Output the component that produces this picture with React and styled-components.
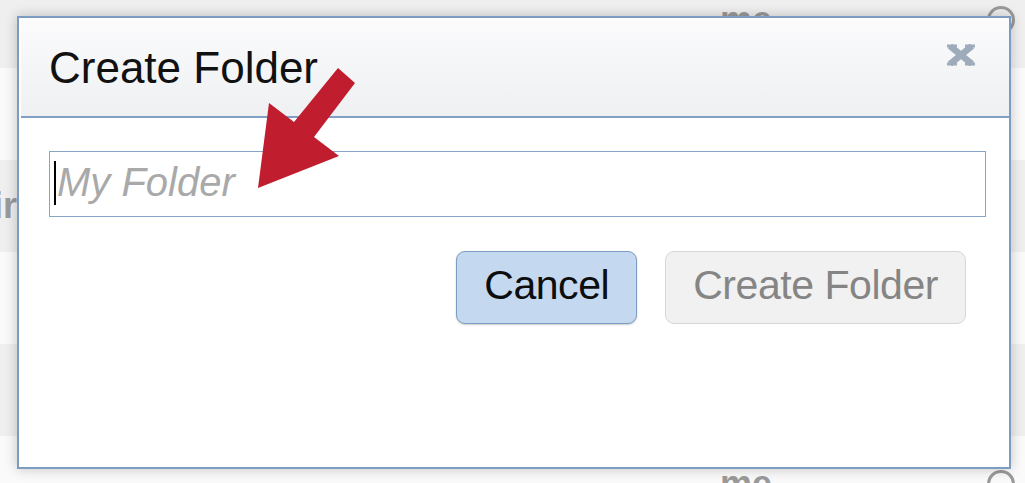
import React from "react";
import styled, { createGlobalStyle } from "styled-components";

const Global = createGlobalStyle`
  html, body { margin: 0; padding: 0; }
  body {
    width: 1025px;
    height: 483px;
    overflow: hidden;
    background: #f7f7f7;
    font-family: "Liberation Sans", Arial, Helvetica, sans-serif;
  }
`;

const Page = styled.div`
  position: relative;
  width: 1025px;
  height: 483px;
  overflow: hidden;
`;

const RowList = styled.div`
  display: flex;
  flex-direction: column;
  margin-top: -24px;
`;

const Row = styled.div`
  display: flex;
  align-items: center;
  height: 92px;
  background: ${(p) => (p.$shade ? "#efefef" : "#fafafa")};
  color: #9a9a9a;
  font-size: 36px;
  font-weight: bold;
`;

const RowName = styled.div`
  width: 17px;
  overflow: hidden;
  direction: rtl;
  white-space: nowrap;
`;

const RowMeta = styled.div`
  margin-left: 703px;
  width: 245px;
  margin-top: ${(p) => p.$shift || 0}px;
`;

const RowIcon = styled.div`
  margin-left: 22px;
  margin-top: ${(p) => p.$shift || 0}px;
  width: 22px;
  height: 22px;
  border: 3px solid #9a9a9a;
  border-radius: 50%;
`;

const Dialog = styled.div`
  position: absolute;
  left: 17px;
  top: 16px;
  width: 988px;
  height: 447px;
  border: 2px solid #7c9cc2;
  background: #ffffff;
  box-shadow: 0 0 12px rgba(0, 0, 0, 0.22);
  display: flex;
  flex-direction: column;
  padding: 2px 0 0 2px;
  box-sizing: content-box;
`;

const Header = styled.div`
  display: flex;
  align-items: center;
  justify-content: space-between;
  height: 96px;
  padding: 0 33px 0 28px;
  background: linear-gradient(#fbfbfc, #eef0f2);
  border-bottom: 2px solid #7f9fc4;
`;

const Title = styled.h1`
  margin: 0;
  font-size: 44px;
  font-weight: normal;
  color: #111;
`;

const Close = styled.svg`
  display: block;
  margin-top: -26px;
  filter: blur(0.6px);
`;

const Body = styled.div`
  display: flex;
  flex-direction: column;
  padding: 33px 23px 0 28px;
`;

const InputWrap = styled.div`
  position: relative;
`;

const Input = styled.input`
  display: block;
  width: 100%;
  box-sizing: border-box;
  height: 66px;
  border: 1.5px solid #87a5c8;
  padding: 0 0 4px 7px;
  font-family: "Liberation Sans", Arial, sans-serif;
  font-size: 40px;
  outline: none;
  &::placeholder {
    color: #a9a9a9;
    font-style: italic;
  }
`;

const Caret = styled.span`
  position: absolute;
  left: 5px;
  top: 10px;
  width: 2px;
  height: 44px;
  background: #000;
`;

const Actions = styled.div`
  display: flex;
  justify-content: flex-end;
  gap: 28px;
  margin-top: 34px;
  padding-right: 20px;
`;

const Button = styled.button`
  height: 73px;
  padding: 0 27px 4px;
  border-radius: 9px;
  font-family: "Liberation Sans", Arial, sans-serif;
  font-size: 41px;
  letter-spacing: -0.45px;
  border: 1.5px solid ${(p) => (p.$primary ? "#7d9cc2" : "#d6d6d6")};
  background: ${(p) => (p.$primary ? "#c4d8f0" : "#f1f1f1")};
  color: ${(p) => (p.$primary ? "#0d0d0d" : "#858585")};
  box-shadow: ${(p) => (p.$primary ? "0 1px 2px rgba(0,0,0,0.2)" : "none")};
`;

const Arrow = styled.svg`
  position: absolute;
  left: 0;
  top: 0;
  pointer-events: none;
`;

const rows = [
  { shade: true, name: "", meta: "me", icon: true, shift: -4 },
  { shade: false, name: "", meta: "", icon: false },
  { shade: true, name: "Pair", meta: "", icon: false },
  { shade: false, name: "", meta: "", icon: false },
  { shade: true, name: "", meta: "", icon: false },
  { shade: false, name: "", meta: "me", icon: true, shift: 4 },
];

export default function App() {
  return (
    <>
      <Global />
      <Page>
        <RowList>
          {rows.map((r, i) => (
            <Row key={i} $shade={r.shade}>
              <RowName>{r.name}</RowName>
              <RowMeta $shift={r.shift}>{r.meta}</RowMeta>
              {r.icon && <RowIcon $shift={r.shift} />}
            </Row>
          ))}
        </RowList>
        <Dialog>
          <Header>
            <Title>Create Folder</Title>
            <Close width="30" height="22" viewBox="0 0 30 22" aria-label="close">
              <path
                d="M4 2 L26 20 M26 2 L4 20"
                stroke="#9dabba"
                strokeWidth="6.5"
                strokeLinecap="butt"
              />
              <path d="M1 2 H11 M19 2 H29 M1 20 H11 M19 20 H29" stroke="#9dabba" strokeWidth="3" />
            </Close>
          </Header>
          <Body>
            <InputWrap>
              <Input placeholder="My Folder" readOnly />
              <Caret />
            </InputWrap>
            <Actions>
              <Button $primary>Cancel</Button>
              <Button>Create Folder</Button>
            </Actions>
          </Body>
        </Dialog>
        <Arrow width="1025" height="483" viewBox="0 0 1025 483">
          <polygon
            points="338,68 355,83 314,137 339,156 258,188 269,103 294,122"
            fill="#c01d2e"
          />
        </Arrow>
      </Page>
    </>
  );
}
